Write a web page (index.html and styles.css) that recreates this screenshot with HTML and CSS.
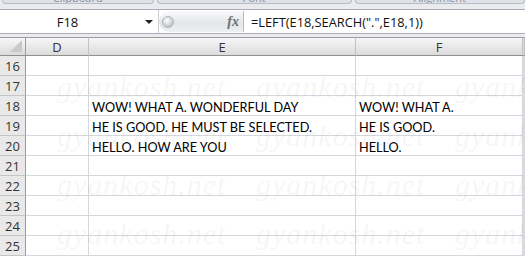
FILE: index.html
```html
<!DOCTYPE html>
<html lang="en">
<head>
  <meta charset="UTF-8">
  <meta name="viewport" content="width=device-width, initial-scale=1.0">
  <title>Sheet</title>
  <link rel="stylesheet" href="styles.css">
</head>
<body>
  <div class="window">
    <!-- bottom edge of the ribbon groups -->
    <div class="ribbon">
      <div class="group g-clip"><span>Clipboard</span></div>
      <div class="group g-font"><span>Font</span></div>
      <div class="group g-align"><span>Alignment</span></div>
    </div>

    <!-- name box + formula bar -->
    <div class="formula-row">
      <div class="name-box">
        <span class="cell-ref">F18</span>
        <span class="drop"></span>
      </div>
      <div class="fx-area">
        <span class="knob"></span>
        <span class="fx">fx</span>
      </div>
      <div class="formula">=LEFT(E18,SEARCH(".",E18,1))</div>
    </div>

    <!-- worksheet -->
    <div class="sheet">
      <div class="grid">
        <div class="hd corner"><span class="tri"></span></div>
        <div class="hd">D</div>
        <div class="hd">E</div>
        <div class="hd">F</div>
        <div class="hd edge"></div>

        <div class="rn">16</div><div class="c"></div><div class="c"></div><div class="c"></div><div class="edge"></div>
        <div class="rn">17</div><div class="c"></div><div class="c"></div><div class="c"></div><div class="edge"></div>
        <div class="rn">18</div><div class="c"></div><div class="c">WOW! WHAT A. WONDERFUL DAY</div><div class="c">WOW! WHAT A.</div><div class="edge"></div>
        <div class="rn">19</div><div class="c"></div><div class="c">HE IS GOOD. HE MUST BE SELECTED.</div><div class="c">HE IS GOOD.</div><div class="edge"></div>
        <div class="rn">20</div><div class="c"></div><div class="c">HELLO. HOW ARE YOU</div><div class="c">HELLO.</div><div class="edge"></div>
        <div class="rn">21</div><div class="c"></div><div class="c"></div><div class="c"></div><div class="edge"></div>
        <div class="rn">22</div><div class="c"></div><div class="c"></div><div class="c"></div><div class="edge"></div>
        <div class="rn">23</div><div class="c"></div><div class="c"></div><div class="c"></div><div class="edge"></div>
        <div class="rn">24</div><div class="c"></div><div class="c"></div><div class="c"></div><div class="edge"></div>
        <div class="rn">25</div><div class="c"></div><div class="c"></div><div class="c"></div><div class="edge"></div>
      </div>

      <!-- watermark laid over the cells -->
      <div class="watermark">
        <span>gyankosh.net</span><span>gyankosh.net</span><span>gyankosh.net</span>
        <span>gyankosh.net</span><span>gyankosh.net</span><span>gyankosh.net</span>
        <span>gyankosh.net</span><span>gyankosh.net</span><span>gyankosh.net</span>
        <span>gyankosh.net</span><span>gyankosh.net</span><span>gyankosh.net</span>
      </div>
    </div>
  </div>
</body>
</html>
```

FILE: styles.css
```css
body {
  margin: 0;
  padding: 0;
  background: #e9ebee;
  font-family: "Open Sans", Arial, sans-serif;
}

.window {
  width: 525px;
  height: 256px;
  overflow: hidden;
}

/* ribbon */
.ribbon {
  display: flex;
  height: 5px;
  background: #e9ebee;
  overflow: hidden;
}

.group {
  height: 3px;
  border: 1px solid #b7bcc4;
  border-top: none;
  border-radius: 0 0 4px 4px;
  background: #dfe2e7;
  text-align: center;
  overflow: hidden;
}

.group span {
  display: block;
  margin-top: -8px;
  font-size: 11px;
  line-height: 11px;
  color: #8a909a;
}

.g-clip { width: 151px; margin-left: 2px; }
.g-font { width: 195px; margin-left: 3px; }
.g-align { width: 170px; margin-left: 3px; }

/* formula bar */
.formula-row {
  display: flex;
  height: 23px;
  margin-top: 4px;
  background: #fff;
  border-top: 1px solid #a9adb3;
  border-bottom: 1px solid #a9adb3;
}

.name-box {
  width: 158px;
  display: flex;
  align-items: center;
  border-right: 1px solid #c9ccd1;
}

.cell-ref {
  flex: 1;
  text-align: center;
  font-size: 13px;
  color: #111;
  margin-right: 10px;
}

.drop {
  width: 0;
  height: 0;
  border-left: 4px solid transparent;
  border-right: 4px solid transparent;
  border-top: 4px solid #222;
  margin-right: 5px;
}

.fx-area {
  width: 85px;
  display: flex;
  align-items: center;
  justify-content: space-between;
  background: linear-gradient(#fbfbfb, #e3e5e8 55%, #eceef0);
  border-radius: 11px 0 0 11px;
  border-right: 1px solid #b7bbc1;
  margin: 1px 0;
  padding: 0 4px 0 3px;
  box-sizing: border-box;
}

.knob {
  width: 10px;
  height: 10px;
  border-radius: 50%;
  background: radial-gradient(circle at 40% 35%, #fff, #c3c6ca 70%);
  border: 1px solid #b0b3b8;
}

.fx {
  font-family: "Liberation Serif", serif;
  font-style: italic;
  font-weight: bold;
  font-size: 14px;
  color: #6c6f74;
}

.formula {
  flex: 1;
  display: flex;
  align-items: center;
  padding-left: 7px;
  font-size: 12.8px;
  color: #111;
}

/* worksheet */
.sheet {
  position: relative;
  margin-top: 3px;
  background: #fff;
}

.grid {
  display: grid;
  grid-template-columns: 26px 63px 267px 167px 2px;
  grid-template-rows: 19px repeat(10, 20px);
}

.grid > div {
  box-sizing: border-box;
}

.hd {
  display: flex;
  align-items: center;
  justify-content: center;
  background: linear-gradient(#f7f7f7, #e6e6e6 60%, #dcdcdc);
  border-top: 1px solid #9a9a9a;
  border-right: 1px solid #c2c2c2;
  border-bottom: 1px solid #8f8f8f;
  font-size: 13px;
  color: #333;
}

.corner {
  border-right: 1px solid #9a9a9a;
  justify-content: flex-end;
  align-items: flex-end;
  padding: 0 3px 3px 0;
}

.tri {
  width: 0;
  height: 0;
  border-left: 12px solid transparent;
  border-bottom: 12px solid #c9c9c9;
}

.rn {
  display: flex;
  align-items: center;
  justify-content: center;
  background: #e9e9e9;
  border-right: 1px solid #9a9a9a;
  border-bottom: 1px solid #c5c5c5;
  font-size: 13px;
  color: #333;
}

.c {
  display: flex;
  align-items: center;
  padding: 2px 0 0 3px;
  white-space: nowrap;
  overflow: hidden;
  border-right: 1px solid #d4d7dc;
  border-bottom: 1px solid #d4d7dc;
  font-family: "Lato", "Open Sans", sans-serif;
  font-size: 12.7px;
  color: #000;
}

.edge {
  background: #d9dbde;
}

.watermark {
  position: absolute;
  left: 57px;
  top: 34px;
  width: 600px;
  display: grid;
  grid-template-columns: repeat(3, 199px);
  grid-auto-rows: 49px;
  pointer-events: none;
}

.watermark span {
  font-family: "Liberation Serif", serif;
  font-style: italic;
  font-size: 30px;
  line-height: 32px;
  letter-spacing: 1px;
  color: rgba(120, 120, 120, 0.08);
}
```
